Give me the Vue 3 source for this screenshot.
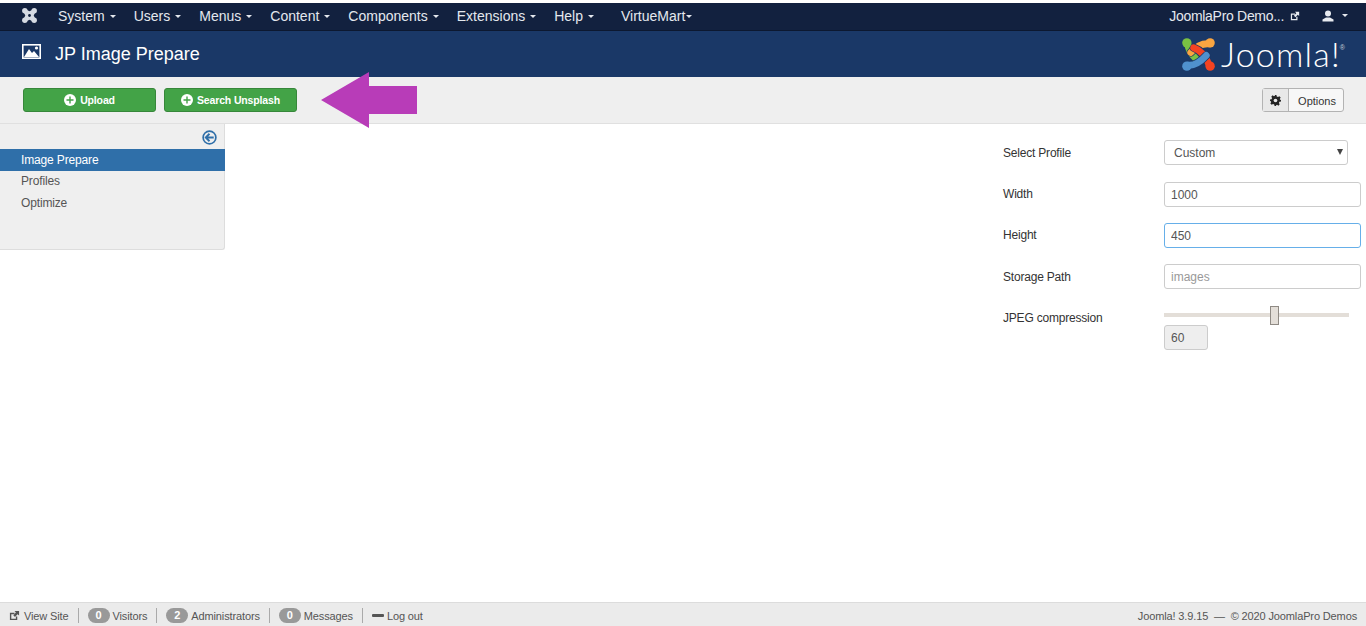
<script setup>
const menus = ['System', 'Users', 'Menus', 'Content', 'Components', 'Extensions', 'Help']
const sideItems = [
  { label: 'Image Prepare', active: true },
  { label: 'Profiles', active: false },
  { label: 'Optimize', active: false }
]
const buttons = ['Upload', 'Search Unsplash']
const status = [
  { count: 0, label: 'Visitors' },
  { count: 2, label: 'Administrators' },
  { count: 0, label: 'Messages' }
]
const strands = [
  { d: 'M6 6Q6 14 15 22', color: '#7ac143' },
  { d: 'M28 6Q18 5 9 15', color: '#f9a541' },
  { d: 'M12 10Q23 14 28 28', color: '#f44321' },
  { d: 'M6 28Q15 29 25 18', color: '#5091cd' }
]
</script>

<template>
  <div class="page">
    <nav class="navbar">
      <svg class="nav-logo" viewBox="0 0 16 16" width="15" height="15">
        <g fill="#d5dae2">
          <circle cx="3" cy="3" r="2.900" /><circle cx="13" cy="3" r="2.900" />
          <circle cx="3" cy="13" r="2.900" /><circle cx="13" cy="13" r="2.900" />
          <path d="M3 1 8 3.500 13 1 15 3 12.500 8 15 13 13 15 8 12.500 3 15 1 13 3.500 8 1 3Z" />
        </g>
        <circle cx="8" cy="8" r="1.500" fill="#12213f" />
      </svg>
      <ul class="menu">
        <li v-for="m in menus" :key="m">{{ m }}<span class="caret"></span></li>
        <li class="vm">VirtueMart<span class="caret tight"></span></li>
      </ul>
      <div class="nav-right">
        <span class="site">JoomlaPro Demo...</span>
        <svg class="ext" viewBox="0 0 12 12" width="10" height="10">
          <path d="M1 3h5v1.500H2.500v5h5V7H9v4H1Z" fill="#e8ebf0" />
          <path d="M6 1h5v5L9.300 4.500 6.500 7.500 4.700 5.700 7.500 2.700Z" fill="#e8ebf0" />
        </svg>
        <svg class="user" viewBox="0 0 12 12" width="12" height="12">
          <circle cx="6" cy="3.500" r="3" fill="#e8ebf0" />
          <path d="M0.500 11.500V9.500L4 7.500h4l3.500 2v2Z" fill="#e8ebf0" />
        </svg>
        <span class="caret user-caret"></span>
      </div>
    </nav>

    <header class="header">
      <svg class="title-icon" viewBox="0 0 19 15" width="19" height="15">
        <rect x="0.800" y="0.800" width="17.400" height="13.400" fill="none" stroke="#fff" stroke-width="1.600" />
        <path d="M2 13 7 5l3 4 2-2 5 6Z" fill="#fff" />
        <circle cx="14.500" cy="4" r="1.600" fill="#fff" />
      </svg>
      <h1>JP Image Prepare</h1>
      <div class="brand">
        <svg viewBox="0 0 34 34" width="33" height="33">
          <g fill="none" stroke-linecap="round" v-for="s in strands" :key="s.color">
            <path :d="s.d" stroke="#1a3867" stroke-width="8.500" />
            <path :d="s.d" :stroke="s.color" stroke-width="7" />
          </g>
          <circle cx="5" cy="5" r="4.800" fill="#7ac143" />
          <circle cx="29" cy="5" r="4.800" fill="#f9a541" />
          <circle cx="29" cy="29" r="4.800" fill="#f44321" />
          <circle cx="5" cy="29" r="4.800" fill="#5091cd" />
        </svg>
        <span class="brand-text">Joomla!</span><sup class="reg">®</sup>
      </div>
    </header>

    <div class="toolbar">
      <button v-for="b in buttons" :key="b" class="btn-green">
        <svg viewBox="0 0 12 12" width="12" height="12">
          <circle cx="6" cy="6" r="6" fill="#fff" />
          <path d="M5.300 2.500h1.400v2.800h2.800v1.400H6.700v2.800H5.300V6.700H2.500V5.300h2.800Z" fill="#43a347" />
        </svg>
        {{ b }}
      </button>
      <svg class="arrow" viewBox="0 0 96 56" width="96" height="56">
        <path d="M0 28 48 0V14H96V42H48V56Z" fill="#b83cb8" />
      </svg>
      <div class="options">
        <span class="opt-icon">
          <svg viewBox="0 0 12 12" width="11" height="11">
            <path d="M5 0h2l.4 1.700 1.300.6L10.200 1.400l1.400 1.400-.9 1.500.6 1.300L12 5v2l-1.700.4-.6 1.300.9 1.500-1.400 1.400-1.500-.9-1.300.6L7 12H5l-.4-1.700-1.300-.6-1.500.9L.4 9.200l.9-1.500-.6-1.300L0 7V5l1.700-.4.6-1.300-.9-1.500L2.800 .4l1.500.9 1.300-.6Z" fill="#222" />
            <circle cx="6" cy="6" r="2" fill="#e8e8e8" />
          </svg>
        </span>
        <span class="opt-label">Options</span>
      </div>
    </div>

    <main class="main">
      <aside class="sidebar">
        <div class="collapse">
          <svg viewBox="0 0 16 16" width="15" height="15">
            <circle cx="8" cy="8" r="6.800" fill="none" stroke="#2f6fa9" stroke-width="1.800" />
            <path d="M8 4 4 8l4 4M4.500 8H12.500" fill="none" stroke="#2f6fa9" stroke-width="2" />
          </svg>
        </div>
        <ul class="side-list">
          <li v-for="s in sideItems" :key="s.label" :class="{ active: s.active }">{{ s.label }}</li>
        </ul>
      </aside>

      <form class="form" @submit.prevent>
        <label class="lab first-row">Select Profile</label>
        <div class="select-wrap first-row">
          <div class="field select">Custom</div>
          <span class="select-arrow"></span>
        </div>
        <label class="lab up">Width</label>
        <input class="field" value="1000" />
        <label class="lab up">Height</label>
        <input class="field focus" value="450" />
        <label class="lab">Storage Path</label>
        <input class="field" placeholder="images" />
        <label class="lab">JPEG compression</label>
        <div class="slider-cell">
          <div class="track"><span class="thumb"></span></div>
          <input class="field number" value="60" disabled />
        </div>
      </form>
    </main>

    <footer class="footer">
      <span class="foot-item first">
        <svg viewBox="0 0 12 12" width="11" height="11">
          <path d="M1 3h5v1.500H2.500v5h5V7H9v4H1Z" fill="#555" />
          <path d="M6 1h5v5L9.300 4.500 6.500 7.500 4.700 5.700 7.500 2.700Z" fill="#555" />
        </svg>
        View Site
      </span>
      <span v-for="s in status" :key="s.label" class="foot-item">
        <span class="badge">{{ s.count }}</span>{{ s.label }}
      </span>
      <span class="foot-item last"><span class="minus"></span>Log out</span>
      <span class="copy">Joomla! 3.9.15 &nbsp;— &nbsp;© 2020 JoomlaPro Demos</span>
    </footer>
  </div>
</template>

<style>
html, body { margin: 0; padding: 0; background: #fff; }
</style>

<style scoped>
.page {
  height: 626px;
  display: flex;
  flex-direction: column;
  padding-top: 3px;
  box-sizing: border-box;
  font-family: "Liberation Sans", Arial, sans-serif;
  font-size: 12px;
  color: #333;
  overflow: hidden;
}
.navbar {
  height: 28px;
  flex: none;
  display: flex;
  align-items: center;
  background: #12213f;
  border-bottom: 1px solid #0c1830;
  box-sizing: border-box;
  padding-bottom: 2px;
  color: #e4e8ee;
  font-size: 14px;
}
.nav-logo { margin-left: 22px; }
.menu {
  list-style: none;
  display: flex;
  margin: 0 0 0 21px;
  padding: 0;
}
.menu li { margin-right: 18px; white-space: nowrap; }
.menu li.vm { margin-left: 9px; margin-right: 0; }
.caret {
  display: inline-block;
  width: 0;
  height: 0;
  margin-left: 5px;
  vertical-align: middle;
  border-left: 3.500px solid transparent;
  border-right: 3.500px solid transparent;
  border-top: 3.500px solid #e4e8ee;
}
.caret.tight { margin-left: 1px; }
.nav-right { margin-left: auto; display: flex; align-items: center; }
.site { letter-spacing: -0.300px; margin-right: 1px; }
.ext { margin-left: 5px; }
.user { margin-left: 22px; }
.user-caret { margin-left: 8px; margin-right: 18px; }

.header {
  height: 46px;
  flex: none;
  display: flex;
  align-items: center;
  background: #1a3867;
  color: #fff;
}
.title-icon { margin-left: 22px; margin-right: 1px; margin-top: -6px; }
h1 {
  margin: 0 0 0 13px;
  font-size: 18px;
  font-weight: 400;
  line-height: 46px;
}
.brand {
  margin-left: auto;
  margin-right: 21px;
  display: flex;
  align-items: center;
}
.brand-text {
  font-family: Lato, sans-serif;
  font-weight: 300;
  font-size: 34px;
  margin-left: 6px;
  letter-spacing: 1.200px;
  line-height: 32px;
}
.reg { font-size: 7px; color: #c9cfd9; align-self: flex-start; margin: 6px 0 0 -1px; line-height: 8px; }

.toolbar {
  height: 47px;
  flex: none;
  position: relative;
  display: flex;
  align-items: center;
  gap: 8px;
  padding: 0 22px 0 23px;
  box-sizing: border-box;
  background: #efefef;
  border-bottom: 1px solid #e0e0e0;
}
.btn-green {
  width: 133px;
  height: 24px;
  display: flex;
  align-items: center;
  justify-content: center;
  gap: 4px;
  padding: 0;
  margin-top: 0;
  background: #43a347;
  border: 1px solid #37873a;
  border-radius: 3px;
  color: #fff;
  font-family: inherit;
  font-size: 10.500px;
  font-weight: 700;
  letter-spacing: -0.150px;
}
.arrow { position: absolute; left: 321px; top: -5px; z-index: 2; }
.options {
  margin-left: auto;
  height: 24px;
  display: flex;
  border: 1px solid #b3b3b3;
  border-radius: 3px;
  box-sizing: border-box;
  background: #f7f7f7;
  font-size: 11px;
  line-height: 24px;
  color: #333;
}
.opt-icon {
  width: 25px;
  display: flex;
  align-items: center;
  justify-content: center;
  background: #e8e8e8;
  border-right: 1px solid #b3b3b3;
}
.opt-label { padding: 0 7px 0 9px; }

.main { flex: 1; display: flex; justify-content: space-between; align-items: flex-start; min-height: 0; }
.sidebar {
  width: 225px;
  height: 126px;
  flex: none;
  box-sizing: border-box;
  background: #efefef;
  border-right: 1px solid #ddd;
  border-bottom: 1px solid #ddd;
  border-bottom-right-radius: 3px;
}
.collapse { height: 25px; display: flex; justify-content: flex-end; align-items: center; padding-right: 7px; padding-top: 2px; box-sizing: border-box; }
.side-list { list-style: none; margin: 0; padding: 0; }
.side-list li { height: 21.500px; line-height: 21.500px; padding-left: 21px; color: #555; letter-spacing: -0.150px; }
.side-list li.active { height: 22px; line-height: 22px; background: #2f6fa9; color: #fff; margin-right: -1px; margin-bottom: 0; }

.form {
  width: 358px;
  margin-top: 16px;
  margin-right: 5px;
  display: grid;
  grid-template-columns: 161px 197px;
  row-gap: 16px;
  align-items: start;
  box-sizing: border-box;
}
.first-row { margin-bottom: 1px; }
.lab { font-size: 12px; height: 25px; line-height: 27px; color: #333; letter-spacing: -0.200px; }
.lab.up { line-height: 25px; }
.field {
  width: 197px;
  height: 25px;
  box-sizing: border-box;
  border: 1px solid #ccc;
  border-radius: 3px;
  padding: 1px 6px 0;
  font-family: inherit;
  font-size: 12px;
  color: #555;
  background: #fff;
  outline: none;
  line-height: 23px;
}
.field::placeholder { color: #999; opacity: 1; }
.field.focus { border-color: #66afe9; }
.select-wrap { position: relative; width: 184px; }
.select { width: 184px; padding-left: 9px; }
.select-arrow {
  position: absolute;
  right: 5px;
  top: 9px;
  border-left: 3px solid transparent;
  border-right: 3px solid transparent;
  border-top: 6px solid #444;
}
.slider-cell { display: flex; flex-direction: column; }
.track {
  position: relative;
  width: 185px;
  height: 4px;
  margin-top: 8px;
  background: #e3ded8;
}
.thumb {
  position: absolute;
  left: 106px;
  top: -7px;
  width: 9px;
  height: 19px;
  box-sizing: border-box;
  background: #e3ded8;
  border: 1px solid #8f8a84;
}
.number {
  width: 44px;
  margin-top: 8px;
  background: #eee;
  color: #555;
}

.footer {
  height: 24px;
  flex: none;
  display: flex;
  align-items: center;
  box-sizing: border-box;
  padding: 2px 9px 0;
  background: #ebebeb;
  border-top: 1px solid #dcdcdc;
  font-size: 11px;
  letter-spacing: -0.130px;
  color: #555;
}
.foot-item {
  display: flex;
  align-items: center;
  gap: 3px;
  height: 15px;
  padding: 0 9px;
  border-right: 1px solid #aaa;
}
.foot-item.first { padding-left: 0; gap: 4px; }
.foot-item.last { border-right: 0; gap: 3px; }
.badge {
  width: 22px;
  height: 15px;
  line-height: 15px;
  text-align: center;
  border-radius: 8px;
  background: #999;
  color: #fff;
  font-weight: 700;
}
.minus { width: 12px; height: 3px; background: #555; border-radius: 1px; }
.copy { margin-left: auto; }
</style>
